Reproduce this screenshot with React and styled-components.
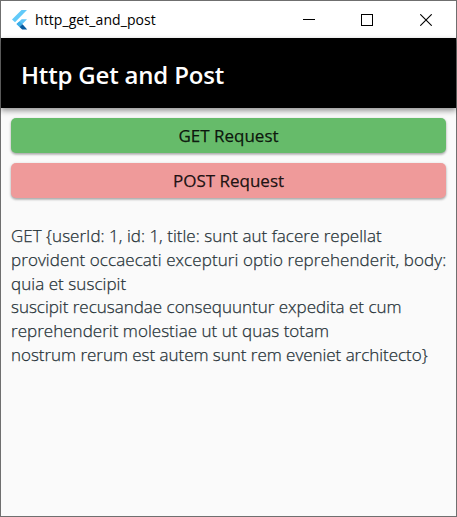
import React from "react";
import styled, { createGlobalStyle } from "styled-components";

const GlobalStyle = createGlobalStyle`
  * { box-sizing: border-box; }
  body { margin: 0; overflow: hidden; background: #fafafa; }
`;

const Window = styled.main`
  width: 457px;
  height: 517px;
  display: flex;
  flex-direction: column;
  border: 1px solid #6f6f6f;
  background: #fafafa;
  font-family: "Open Sans", "Noto Sans", sans-serif;
`;

const TitleBar = styled.header`
  flex: none;
  height: 37px;
  display: flex;
  align-items: center;
  padding-left: 10px;
  background: #fff;
`;

const WindowTitle = styled.span`
  flex: 1;
  margin-left: 6px;
  font-size: 14px;
  line-height: 20px;
  letter-spacing: ${(p) => p.$spacing}px;
  white-space: nowrap;
  color: #000;
`;

const WindowControl = styled.span`
  width: ${(p) => p.$width}px;
  height: 37px;
  display: flex;
  align-items: center;
  justify-content: center;
`;

const AppBar = styled.div`
  flex: none;
  height: 70px;
  display: flex;
  align-items: center;
  padding: 4px 20px 0;
  background: #000;
  box-shadow: 0 2px 5px rgba(0, 0, 0, 0.32), 0 4px 6px rgba(0, 0, 0, 0.14);
`;

const Heading = styled.h1`
  margin: 0;
  font-size: 24px;
  font-weight: 600;
  line-height: 32px;
  letter-spacing: ${(p) => p.$spacing}px;
  white-space: nowrap;
  color: #fff;
`;

const Content = styled.section`
  display: flex;
  flex-direction: column;
  gap: 10px;
  padding: 10px;
`;

const RequestButton = styled.button`
  height: 35px;
  padding: 0;
  border: 0;
  border-radius: 5px;
  background: ${(p) => p.$color};
  box-shadow: 0 1px 3px rgba(0, 0, 0, 0.28), 0 2px 2px rgba(0, 0, 0, 0.12);
  font-family: inherit;
  font-size: 17px;
  font-weight: 500;
  line-height: 24px;
  letter-spacing: ${(p) => p.$spacing}px;
  color: rgba(0, 0, 0, 0.87);
  -webkit-text-stroke: 0.25px rgba(0, 0, 0, 0.87);
`;

const Response = styled.div`
  margin-top: 16px;
  font-size: 17px;
  font-weight: 300;
  line-height: 23.8px;
  color: #263238;
  -webkit-text-stroke: 0.25px #263238;
`;

const Line = styled.div`
  width: max-content;
  white-space: nowrap;
  letter-spacing: ${(p) => p.$spacing}px;
`;

const lines = [
  ["GET {userId: 1, id: 1, title: sunt aut facere repellat", 0.02],
  ["provident occaecati excepturi optio reprehenderit, body:", 0.085],
  ["quia et suscipit", 0.06],
  ["suscipit recusandae consequuntur expedita et cum", -0.01],
  ["reprehenderit molestiae ut ut quas totam", 0.03],
  ["nostrum rerum est autem sunt rem eveniet architecto}", -0.03],
];

const FlutterLogo = () => (
  <svg width="18" height="20" viewBox="0 0 18 20">
    <path d="M10.5 0H16L4 12.2 1 9.5Z" fill="#62caf9" />
    <path d="M10.7 9.2H16L10.2 15.2 8.5 16.8 5.5 14Z" fill="#5cc5f8" />
    <path d="M5.5 14 8.3 11.4 11.5 14.2 8.5 17Z" fill="#3dafe9" />
    <path d="M8.5 17 11.5 14.2 16.2 19.5H11.2Z" fill="#075ba0" />
  </svg>
);

export default function App() {
  return (
    <>
      <GlobalStyle />
      <Window>
        <TitleBar>
          <FlutterLogo />
          <WindowTitle $spacing={0.08}>http_get_and_post</WindowTitle>
          <WindowControl $width={58}>
            <svg width="12" height="12" shapeRendering="crispEdges"><path d="M0 5.5H12" stroke="#000" /></svg>
          </WindowControl>
          <WindowControl $width={58}>
            <svg width="12" height="12" shapeRendering="crispEdges"><path d="M.5 .5H11.5V11.5H.5Z" fill="none" stroke="#000" /></svg>
          </WindowControl>
          <WindowControl $width={60}>
            <svg width="12" height="12"><path d="M.3 .3 11.7 11.7M11.7 .3 .3 11.7" stroke="#000" strokeWidth="1.1" /></svg>
          </WindowControl>
        </TitleBar>
        <AppBar>
          <Heading $spacing={-0.18}>Http Get and Post</Heading>
        </AppBar>
        <Content>
          <RequestButton $color="#66bb6a" $spacing={0}>GET Request</RequestButton>
          <RequestButton $color="#ef9a9a" $spacing={0}>POST Request</RequestButton>
          <Response>
            {lines.map(([text, spacing]) => (
              <Line key={text} $spacing={spacing}>{text}</Line>
            ))}
          </Response>
        </Content>
      </Window>
    </>
  );
}
